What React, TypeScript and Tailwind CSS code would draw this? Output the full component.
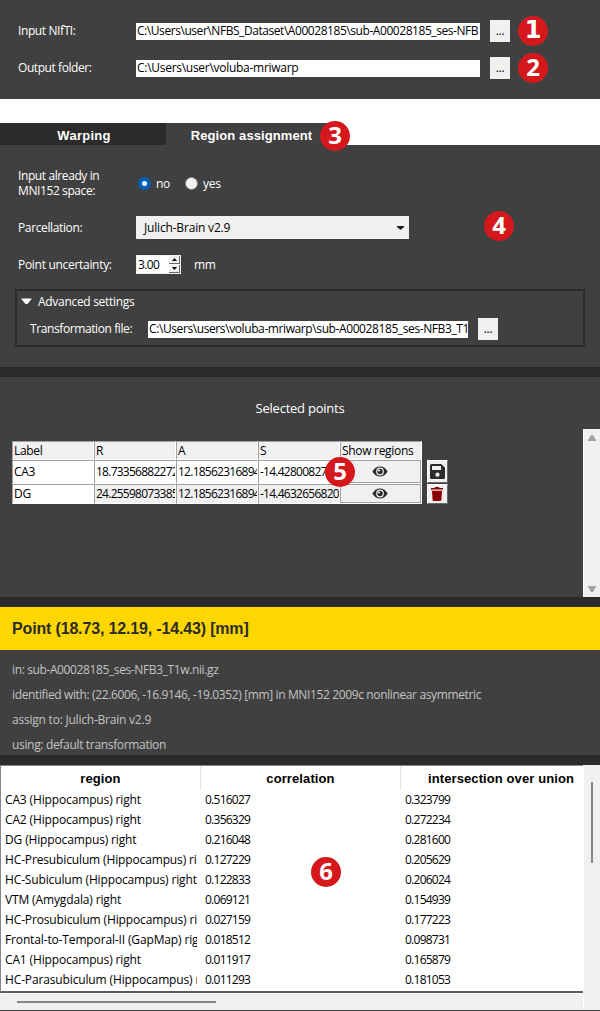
import type { ReactNode } from "react";

function Badge({ n, className }: { n: string; className: string }) {
  return (
    <span
      className={`absolute z-10 flex h-[30px] w-[30px] items-center justify-center rounded-full bg-[#d4181b] pb-[2px] text-[24px] leading-none font-bold tracking-normal text-white ${className}`}
    >
      {n}
    </span>
  );
}

function Entry({ children, className }: { children: ReactNode; className: string }) {
  return (
    <div className={`h-[17px] shrink-0 overflow-hidden bg-white pl-[1px] leading-[15px] whitespace-nowrap text-black ${className}`}>
      {children}
    </div>
  );
}

function Browse() {
  return (
    <button className="ml-[10px] flex h-[22px] w-5 shrink-0 items-center justify-center bg-[#f0f0f0] leading-none text-black">
      ...
    </button>
  );
}

function Eye() {
  return (
    <svg className="mr-px h-[11px] w-[16px]" viewBox="0 0 16 11">
      <path d="M0.4 5.5C2 2.4 4.8 0.5 8 0.5s6 1.9 7.6 5C14 8.6 11.2 10.5 8 10.5S2 8.600.4 5.5Z" fill="#2b2b2b" />
      <circle cx="8" cy="5.5" r="3.9" fill="#f0f0f0" />
      <circle cx="8" cy="5.5" r="2.7" fill="#2b2b2b" />
      <circle cx="7" cy="4.5" r="1.1" fill="#f0f0f0" />
    </svg>
  );
}

const cell = "overflow-hidden whitespace-nowrap border-t border-l border-r border-b border-t-[#a0a0a0] border-l-[#a0a0a0] border-r-white border-b-white pl-[1px]";

const points = [
  { label: "CA3", r: "18.73356882272", a: "12.18562316894", s: "-14.428008270", tone: "bg-white", h: "h-6 leading-[22px]" },
  { label: "DG", r: "24.25598073385", a: "12.18562316894", s: "-14.4632656820", tone: "bg-[#f0f0f0]", h: "h-5 leading-[18px]" },
];

const rows = [
  ["CA3 (Hippocampus) right", "0.516027", "0.323799"],
  ["CA2 (Hippocampus) right", "0.356329", "0.272234"],
  ["DG (Hippocampus) right", "0.216048", "0.281600"],
  ["HC-Presubiculum (Hippocampus) ri", "0.127229", "0.205629"],
  ["HC-Subiculum (Hippocampus) right", "0.122833", "0.206024"],
  ["VTM (Amygdala) right", "0.069121", "0.154939"],
  ["HC-Prosubiculum (Hippocampus) ri", "0.027159", "0.177223"],
  ["Frontal-to-Temporal-II (GapMap) rig", "0.018512", "0.098731"],
  ["CA1 (Hippocampus) right", "0.011917", "0.165879"],
  ["HC-Parasubiculum (Hippocampus) r", "0.011293", "0.181053"],
];

export default function App() {
  return (
    <div className="relative flex h-[1011px] w-[600px] flex-col overflow-hidden bg-[#404040] font-['Open_Sans',sans-serif] text-[12px] leading-[15px] tracking-[-0.3px] text-white">
      <section className="flex h-[99px] shrink-0 flex-col gap-[15px] pt-5 pl-[18px]">
        <div className="flex h-[22px] items-center">
          <span className="w-[118px] pb-[2px] tracking-[-0.4px]">Input NIfTI:</span>
          <Entry className="w-[344px] tracking-[-0.44px]">C:\Users\user\NFBS_Dataset\A00028185\sub-A00028185_ses-NFB</Entry>
          <Browse />
        </div>
        <div className="flex h-[22px] items-center">
          <span className="w-[118px] pb-[2px] tracking-[-0.43px]">Output folder:</span>
          <Entry className="w-[344px] tracking-[-0.28px]">C:\Users\user\voluba-mriwarp</Entry>
          <Browse />
        </div>
      </section>

      <nav className="flex h-[46px] shrink-0 items-end bg-white font-['Liberation_Sans',sans-serif] text-[13px] font-bold tracking-[0.1px]">
        <div className="flex h-[22px] w-[166px] items-center justify-center bg-[#2b2b2b] pt-[3px] pl-[2px] tracking-[0.25px]">Warping</div>
        <div className="flex h-[22px] w-[170px] items-center justify-center bg-[#404040] pt-[3px] pl-px">Region assignment</div>
      </nav>

      <section className="flex h-[222px] shrink-0 flex-col">
        <div className="mt-[22px] flex h-[32px] items-center pl-[18px]">
          <span className="w-[120px] tracking-[-0.4px]">
            Input already in
            <br />
            MNI152 space:
          </span>
          <span className="flex h-[13px] w-[13px] items-center justify-center rounded-full bg-[#005fb8]">
            <span className="h-[5px] w-[5px] rounded-full bg-white" />
          </span>
          <span className="ml-[5px] w-[29px]">no</span>
          <span className="h-[13px] w-[13px] rounded-full border border-[#858585] bg-[#f3f3f3]" />
          <span className="ml-[5px]">yes</span>
        </div>
        <div className="mt-[17px] flex h-[23px] items-center pl-[18px]">
          <span className="w-[118px] tracking-[-0.37px]">Parcellation:</span>
          <div className="flex h-[23px] w-[273px] items-center justify-between bg-[#f0f0f0] pr-[5px] pl-[8px] text-black">
            <span className="tracking-[-0.18px]">Julich-Brain v2.9</span>
            <svg className="h-[4px] w-[7px]" viewBox="0 0 7 4">
              <path d="M0 0h7v1L3.500 4 0 1Z" fill="#1c1c1c" />
            </svg>
          </div>
        </div>
        <div className="mt-4 flex h-[19px] items-center pl-[18px]">
          <span className="w-[118px]">Point uncertainty:</span>
          <div className="flex h-[19px] w-[45px] items-center justify-between border border-[#f0f0f0] bg-white pr-0 pl-[1px] text-black">
            <span className="tracking-[-0.6px]">3.00</span>
            <span className="flex h-[17px] w-[11px] flex-col">
              <span className="flex h-[8px] items-center justify-center border-r border-b border-[#696969] bg-[#f0f0f0]">
                <svg className="h-[3px] w-[5px]" viewBox="0 0 5 3">
                  <path d="M2.500 0 5 3H0Z" />
                </svg>
              </span>
              <span className="mt-px flex h-[8px] items-center justify-center border-r border-b border-[#696969] bg-[#f0f0f0]">
                <svg className="h-[3px] w-[5px]" viewBox="0 0 5 3">
                  <path d="M2.500 3 5 0H0Z" />
                </svg>
              </span>
            </span>
          </div>
          <span className="ml-[13px]">mm</span>
        </div>
        <div className="mt-[15px] ml-[15px] flex h-[58px] w-[570px] flex-col border-2 border-[#2b2b2b]">
          <div className="mt-[3px] flex h-[15px] items-center pl-[4px]">
            <svg className="mr-[6px] h-[7px] w-[11px]" viewBox="0 0 11 7">
              <path d="M0 0.500h11L6.500 6h-2Z" fill="#fff" />
            </svg>
            Advanced settings
          </div>
          <div className="mt-[9px] flex h-[22px] items-center pl-[13px]">
            <span className="w-[118px] pb-[2px] tracking-[-0.4px]">Transformation file:</span>
            <Entry className="w-[320px] tracking-[-0.4px]">C:\Users\users\voluba-mriwarp\sub-A00028185_ses-NFB3_T1</Entry>
            <Browse />
          </div>
        </div>
      </section>

      <section className="flex h-[240px] shrink-0 flex-col border-y-[10px] border-[#2b2b2b]">
        <div className="mt-[23px] text-center text-[13px] leading-4 tracking-[-0.24px]">Selected points</div>
        <div className="mt-[13px] flex h-[168px] justify-between">
          <div className="flex pt-3 pl-3">
            <div className="flex w-[410px] flex-col text-black">
              <div className="grid h-[19px] grid-cols-5 bg-[#f0f0f0] leading-[17px]">
                {["Label", "R", "A", "S", "Show regions"].map((h) => (
                  <div key={h} className={cell}>{h}</div>
                ))}
              </div>
              {points.map((p) => (
                <div key={p.label} className={`grid grid-cols-5 tracking-[-0.75px] ${p.h}`}>
                  <div className={`bg-white tracking-[-0.3px] ${cell}`}>{p.label}</div>
                  <div className={`${p.tone} ${cell}`}>{p.r}</div>
                  <div className={`${p.tone} ${cell}`}>{p.a}</div>
                  <div className={`${p.tone} ${cell}`}>{p.s}</div>
                  <div className="flex border-r border-b border-white bg-[#f0f0f0]">
                    <span className="flex flex-1 items-center justify-center border border-[#a0a0a0]">
                      <Eye />
                    </span>
                  </div>
                </div>
              ))}
            </div>
            <div className="mt-[19px] ml-[5px] flex flex-col gap-px">
              <span className="flex h-[23px] w-[21px] items-center justify-center border border-t-white border-r-[#696969] border-b-[#696969] border-l-white bg-[#f0f0f0]">
                <svg className="h-[15px] w-[15px]" viewBox="0 0 15 15">
                  <path d="M1.500 0h9.800L15 3.700v9.800a1.500 1.500 0 0 1-1.500 1.500h-12A1.500 1.500 0 0 1 0 13.500v-12A1.500 1.500 0 0 1 1.500 0Z" fill="#2b2b2b" />
                  <path d="M2 2h9v4H2Z" fill="#f0f0f0" />
                  <circle cx="7.500" cy="10.700" r="2.100" fill="#f0f0f0" />
                </svg>
              </span>
              <span className="flex h-[20px] w-[21px] items-center justify-center border border-t-white border-r-[#696969] border-b-[#696969] border-l-white bg-[#f0f0f0] pr-px">
                <svg className="h-[14px] w-[12px]" viewBox="0 0 12 14">
                  <path d="M0 1h3.500L4.200 0h3.600l.7 1H12v1H0Z" fill="#8b0000" />
                  <path d="M0 2h12v1.500H0Z" fill="#c07070" />
                  <path d="M1 4h10l-.6 8.800A1.300 1.300 0 0 1 9.100 14H2.900a1.300 1.300 0 0 1-1.300-1.200Z" fill="#8b0000" />
                </svg>
              </span>
            </div>
          </div>
          <div className="flex w-[17px] flex-col items-center justify-between border-l border-white bg-[#f0f0f0] pt-[6px] pb-[5px]">
            <svg className="h-[6px] w-[8px]" viewBox="0 0 8 6">
              <path d="M3 0h2l3 5v1H0V5Z" fill="#a3a3a3" />
            </svg>
            <svg className="h-[6px] w-[8px]" viewBox="0 0 8 6">
              <path d="M3 6h2l3-5V0H0v1Z" fill="#a3a3a3" />
            </svg>
          </div>
        </div>
      </section>

      <h1 className="flex h-[43px] shrink-0 items-center bg-[#ffd700] pl-3 font-['Liberation_Sans',sans-serif] text-[16px] font-bold tracking-[-0.16px] text-[#2b2b2b]">
        Point (18.73, 12.19, -14.43) [mm]
      </h1>
      <section className="flex h-[115px] shrink-0 flex-col border-b-[10px] border-[#2b2b2b] pt-[7px] pl-3 leading-[25px] text-[#c3c3c3]">
        <p className="tracking-[-0.38px]">in: sub-A00028185_ses-NFB3_T1w.nii.gz</p>
        <p className="tracking-[-0.37px]">identified with: (22.6006, -16.9146, -19.0352) [mm] in MNI152 2009c nonlinear asymmetric</p>
        <p className="tracking-[-0.22px]">assign to: Julich-Brain v2.9</p>
        <p className="tracking-[-0.33px]">using: default transformation</p>
      </section>

      <section className="flex h-[246px] shrink-0 border-b border-[#404040] bg-[#f0f0f0] text-black">
        <div className="flex w-[583px] flex-col">
          <div className="flex h-[228px] flex-col overflow-hidden border-t border-b-2 border-l border-[#828790] border-b-[#5a5c62] bg-white">
            <div className="flex h-6 shrink-0 font-['Liberation_Sans',sans-serif] text-[13px] leading-[25px] font-bold tracking-[0.1px]">
              <div className="w-[200px] shrink-0 border-r border-[#e5e5e5] text-center">region</div>
              <div className="w-[200px] shrink-0 border-r border-[#e5e5e5] text-center">correlation</div>
              <div className="w-[200px] shrink-0 text-center">intersection over union</div>
            </div>
            {rows.map((r) => (
              <div key={r[0]} className="flex h-5 shrink-0 leading-5 whitespace-nowrap">
                <div className="mr-[8px] ml-[4px] w-[192px] shrink-0 overflow-hidden tracking-[-0.14px]">{r[0]}</div>
                <div className="w-[200px] shrink-0 tracking-[-0.75px]">{r[1]}</div>
                <div className="tracking-[-0.75px]">{r[2]}</div>
              </div>
            ))}
          </div>
          <div className="flex h-[17px] items-center border-t border-white pl-[17px]">
            <div className="h-[2px] w-[199px] bg-[#868686]" />
          </div>
        </div>
        <div className="w-[17px] border-l border-white pt-[17px] pl-[7px]">
          <div className="h-[81px] w-[2px] bg-[#868686]" />
        </div>
      </section>

      <Badge n="1" className="top-4 left-[518px] font-['DejaVu_Sans']" />
      <Badge n="2" className="top-[53px] left-[518px]" />
      <Badge n="3" className="top-[121px] left-[320px]" />
      <Badge n="4" className="top-[211px] left-[484px]" />
      <Badge n="5" className="top-[457px] left-[325px]" />
      <Badge n="6" className="top-[857px] left-[311px]" />
    </div>
  );
}
